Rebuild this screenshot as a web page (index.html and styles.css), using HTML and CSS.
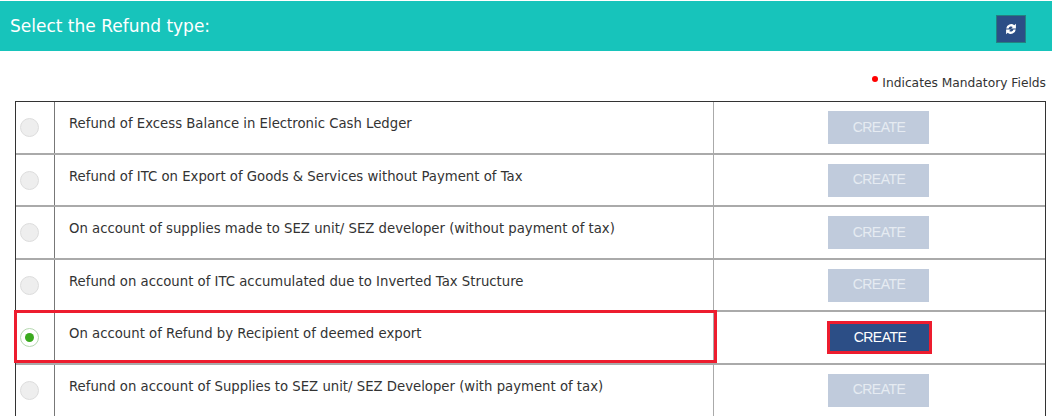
FILE: index.html
```html
<!DOCTYPE html>
<html lang="en">

<head>
    <meta charset="UTF-8">
    <title>Select the Refund type</title>
    <link rel="stylesheet" href="styles.css">
</head>

<body>
    <header class="title-bar">
        <h2>Select the Refund type:</h2>
        <button class="refresh-button" aria-label="Refresh">
            <svg viewBox="0 0 12 12" width="12" height="12">
                <path d="M1.2 5.4A4.9 4.9 0 0 1 9.3 2.3L10.9 .8V5.6H6.2L7.8 4A2.6 2.6 0 0 0 3.6 5.4Z" fill="#fff" />
                <path d="M10.8 6.6A4.9 4.9 0 0 1 2.7 9.7L1.1 11.2V6.4H5.8L4.2 8A2.6 2.6 0 0 0 8.4 6.6Z" fill="#fff" />
            </svg>
        </button>
    </header>

    <p class="mandatory"><span class="dot"></span>Indicates Mandatory Fields</p>

    <div class="refund-table">
        <div class="refund-row">
            <div class="cell-radio"><span class="radio"></span></div>
            <div class="cell-name">Refund of Excess Balance in Electronic Cash Ledger</div>
            <div class="cell-action"><button class="create-button">CREATE</button></div>
        </div>
        <div class="refund-row">
            <div class="cell-radio"><span class="radio"></span></div>
            <div class="cell-name">Refund of ITC on Export of Goods &amp; Services without Payment of Tax</div>
            <div class="cell-action"><button class="create-button">CREATE</button></div>
        </div>
        <div class="refund-row">
            <div class="cell-radio"><span class="radio"></span></div>
            <div class="cell-name">On account of supplies made to SEZ unit/ SEZ developer (without payment of tax)</div>
            <div class="cell-action"><button class="create-button">CREATE</button></div>
        </div>
        <div class="refund-row">
            <div class="cell-radio"><span class="radio"></span></div>
            <div class="cell-name">Refund on account of ITC accumulated due to Inverted Tax Structure</div>
            <div class="cell-action"><button class="create-button">CREATE</button></div>
        </div>
        <div class="refund-row selected">
            <div class="cell-radio"><span class="radio checked"></span></div>
            <div class="cell-name">On account of Refund by Recipient of deemed export</div>
            <div class="cell-action"><button class="create-button active">CREATE</button></div>
            <span class="highlight-box"></span>
        </div>
        <div class="refund-row">
            <div class="cell-radio"><span class="radio"></span></div>
            <div class="cell-name">Refund on account of Supplies to SEZ unit/ SEZ Developer (with payment of tax)</div>
            <div class="cell-action"><button class="create-button">CREATE</button></div>
        </div>
    </div>
</body>

</html>
```

FILE: styles.css
```css
* {
    box-sizing: border-box;
    margin: 0;
    padding: 0;
}

html, body {
    height: 416px;
    overflow: hidden;
}

body {
    font-family: "DejaVu Sans", sans-serif;
    background-color: #fff;
    color: #333;
    padding-top: 1px;
}

.title-bar {
    height: 50px;
    background-color: #17c4bb;
    display: flex;
    justify-content: space-between;
    align-items: center;
    padding: 0 26px 0 10px;
}

.title-bar h2 {
    font-size: 17px;
    font-weight: normal;
    color: #fff;
}

.refresh-button {
    width: 30px;
    height: 28px;
    margin-top: 5px;
    background-color: #2c4e86;
    border: 1px solid #24817f;
    display: flex;
    align-items: center;
    justify-content: center;
}

.mandatory {
    height: 50px;
    padding: 25px 6px 0 0;
    text-align: right;
    font-size: 12.25px;
    line-height: 14px;
}

.dot {
    display: inline-block;
    width: 6px;
    height: 6px;
    margin-right: 4px;
    border-radius: 50%;
    background-color: #f00;
    vertical-align: 5px;
}

.refund-table {
    margin: 0 6px 0 15px;
    border: 1px solid #333;
    border-bottom: none;
}

.refund-row {
    position: relative;
    display: grid;
    grid-template-columns: 39px 659px 1fr;
    height: 52.5px;
    border-bottom: 2px solid #aaa;
}

.refund-row:last-child {
    border-bottom: none;
}

.cell-radio {
    border-right: 1px solid #777;
    padding: 16px 0 0 4px;
}

.cell-name {
    border-right: 1px solid #aaa;
    padding: 13px 0 0 14px;
    font-size: 13.25px;
    line-height: 18px;
}

.cell-action {
    display: flex;
    justify-content: center;
    padding: 9px 2px 0 0;
}

.radio {
    display: block;
    width: 19px;
    height: 19px;
    border-radius: 50%;
    background-color: #eee;
    border: 1px solid #ddd;
}

.radio.checked {
    background-color: #fff;
    border-color: #b5d8b0;
    position: relative;
}

.radio.checked::after {
    content: "";
    position: absolute;
    top: 4px;
    left: 4px;
    width: 9px;
    height: 9px;
    border-radius: 50%;
    background-color: #3aaa1e;
}

.create-button {
    width: 101px;
    height: 33px;
    padding: 0 0 2px 1px;
    background-color: #c0cbdc;
    border: none;
    color: #e6ebf2;
    font-family: "Liberation Sans", sans-serif;
    font-size: 14px;
    letter-spacing: -0.5px;
}

.create-button.active {
    width: 105px;
    margin-left: 2px;
    background-color: #2c4e86;
    border: 3px solid #ed1c2e;
    color: #fff;
}

.highlight-box {
    position: absolute;
    top: -2px;
    left: -2px;
    width: 703px;
    height: 53px;
    border: 3px solid #ed1c2e;
}
```
